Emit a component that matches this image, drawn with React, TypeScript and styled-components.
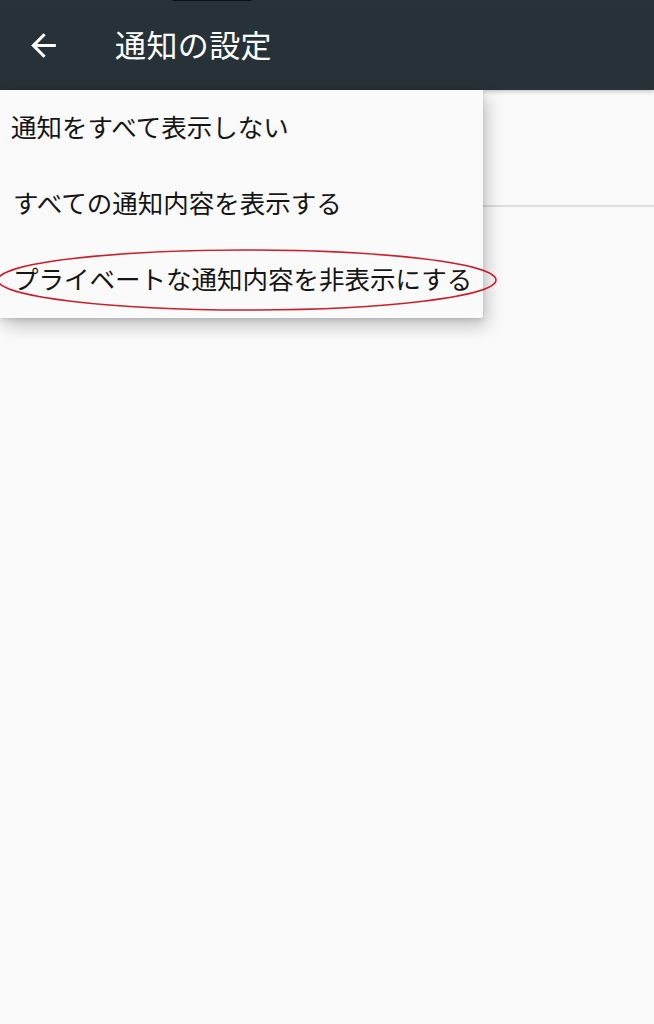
import React from 'react';
import styled, { createGlobalStyle } from 'styled-components';

const GlobalStyle = createGlobalStyle`
  html, body {
    margin: 0;
    padding: 0;
    background: #fafafa;
  }
  body {
    font-family: "Noto Sans CJK JP", "Noto Sans", sans-serif;
  }
`;

const Screen = styled.div`
  position: relative;
  width: 654px;
  height: 1024px;
  background: #fafafa;
  overflow: hidden;
`;

const StatusStrip = styled.div`
  height: 2px;
  background: #263238;
  display: flex;
  padding-left: 173px;
`;

const StatusMark = styled.div`
  width: 78px;
  height: 1px;
  background: #0a0f1e;
`;

const Toolbar = styled.header`
  height: 88px;
  background: #263238;
  display: flex;
  align-items: center;
  box-shadow: 0 2px 4px rgba(0, 0, 0, 0.2);
`;

const BackButton = styled.button`
  width: 88px;
  height: 88px;
  margin-top: -2px;
  border: none;
  background: transparent;
  display: flex;
  align-items: center;
  padding: 0 0 0 25px;
  color: #fff;
`;

const Title = styled.h1`
  margin: -6px 0 0 27px;
  font-size: 31px;
  font-weight: 400;
  color: #fff;
  letter-spacing: 0.4px;
`;

const Content = styled.div`
  display: flex;
  flex-direction: column;
`;

const BackgroundRow = styled.div`
  height: 115px;
  border-bottom: 2px solid #dedede;
`;

const Menu = styled.ul`
  position: absolute;
  top: 90px;
  left: 0;
  width: 483px;
  margin: 0;
  padding: 0;
  list-style: none;
  background: #fafafa;
  border-radius: 0 0 3px 0;
  box-shadow: 4px 8px 18px rgba(0, 0, 0, 0.22), 0 2px 5px rgba(0, 0, 0, 0.12);
`;

const MenuItem = styled.li<{ indent: number }>`
  height: 76px;
  box-sizing: border-box;
  padding-bottom: 5px;
  display: flex;
  align-items: center;
  padding-left: ${p => p.indent}px;
  font-size: 25.5px;
  color: #151515;
  white-space: nowrap;
`;

const Highlight = styled.svg`
  position: absolute;
  top: 246px;
  left: -4px;
  width: 504px;
  height: 68px;
  pointer-events: none;
`;

const items = [
  { label: '通知をすべて表示しない', indent: 11 },
  { label: 'すべての通知内容を表示する', indent: 13 },
  { label: 'プライベートな通知内容を非表示にする', indent: 13 },
];

export default function App() {
  return (
    <Screen>
      <GlobalStyle />
      <StatusStrip>
        <StatusMark />
      </StatusStrip>
      <Toolbar>
        <BackButton aria-label="戻る">
          <svg width="37" height="37" viewBox="0 0 24 24" fill="currentColor">
            <path d="M20 11H7.83l5.59-5.59L12 4l-8 8 8 8 1.41-1.41L7.83 13H20v-2z" />
          </svg>
        </BackButton>
        <Title>通知の設定</Title>
      </Toolbar>
      <Content>
        <BackgroundRow />
      </Content>
      <Menu>
        {items.map(item => (
          <MenuItem key={item.label} indent={item.indent}>
            {item.label}
          </MenuItem>
        ))}
      </Menu>
      <Highlight viewBox="0 0 504 68">
        <ellipse cx="251" cy="34" rx="249" ry="30" fill="none" stroke="#c8202a" strokeWidth="1.6" />
      </Highlight>
    </Screen>
  );
}
